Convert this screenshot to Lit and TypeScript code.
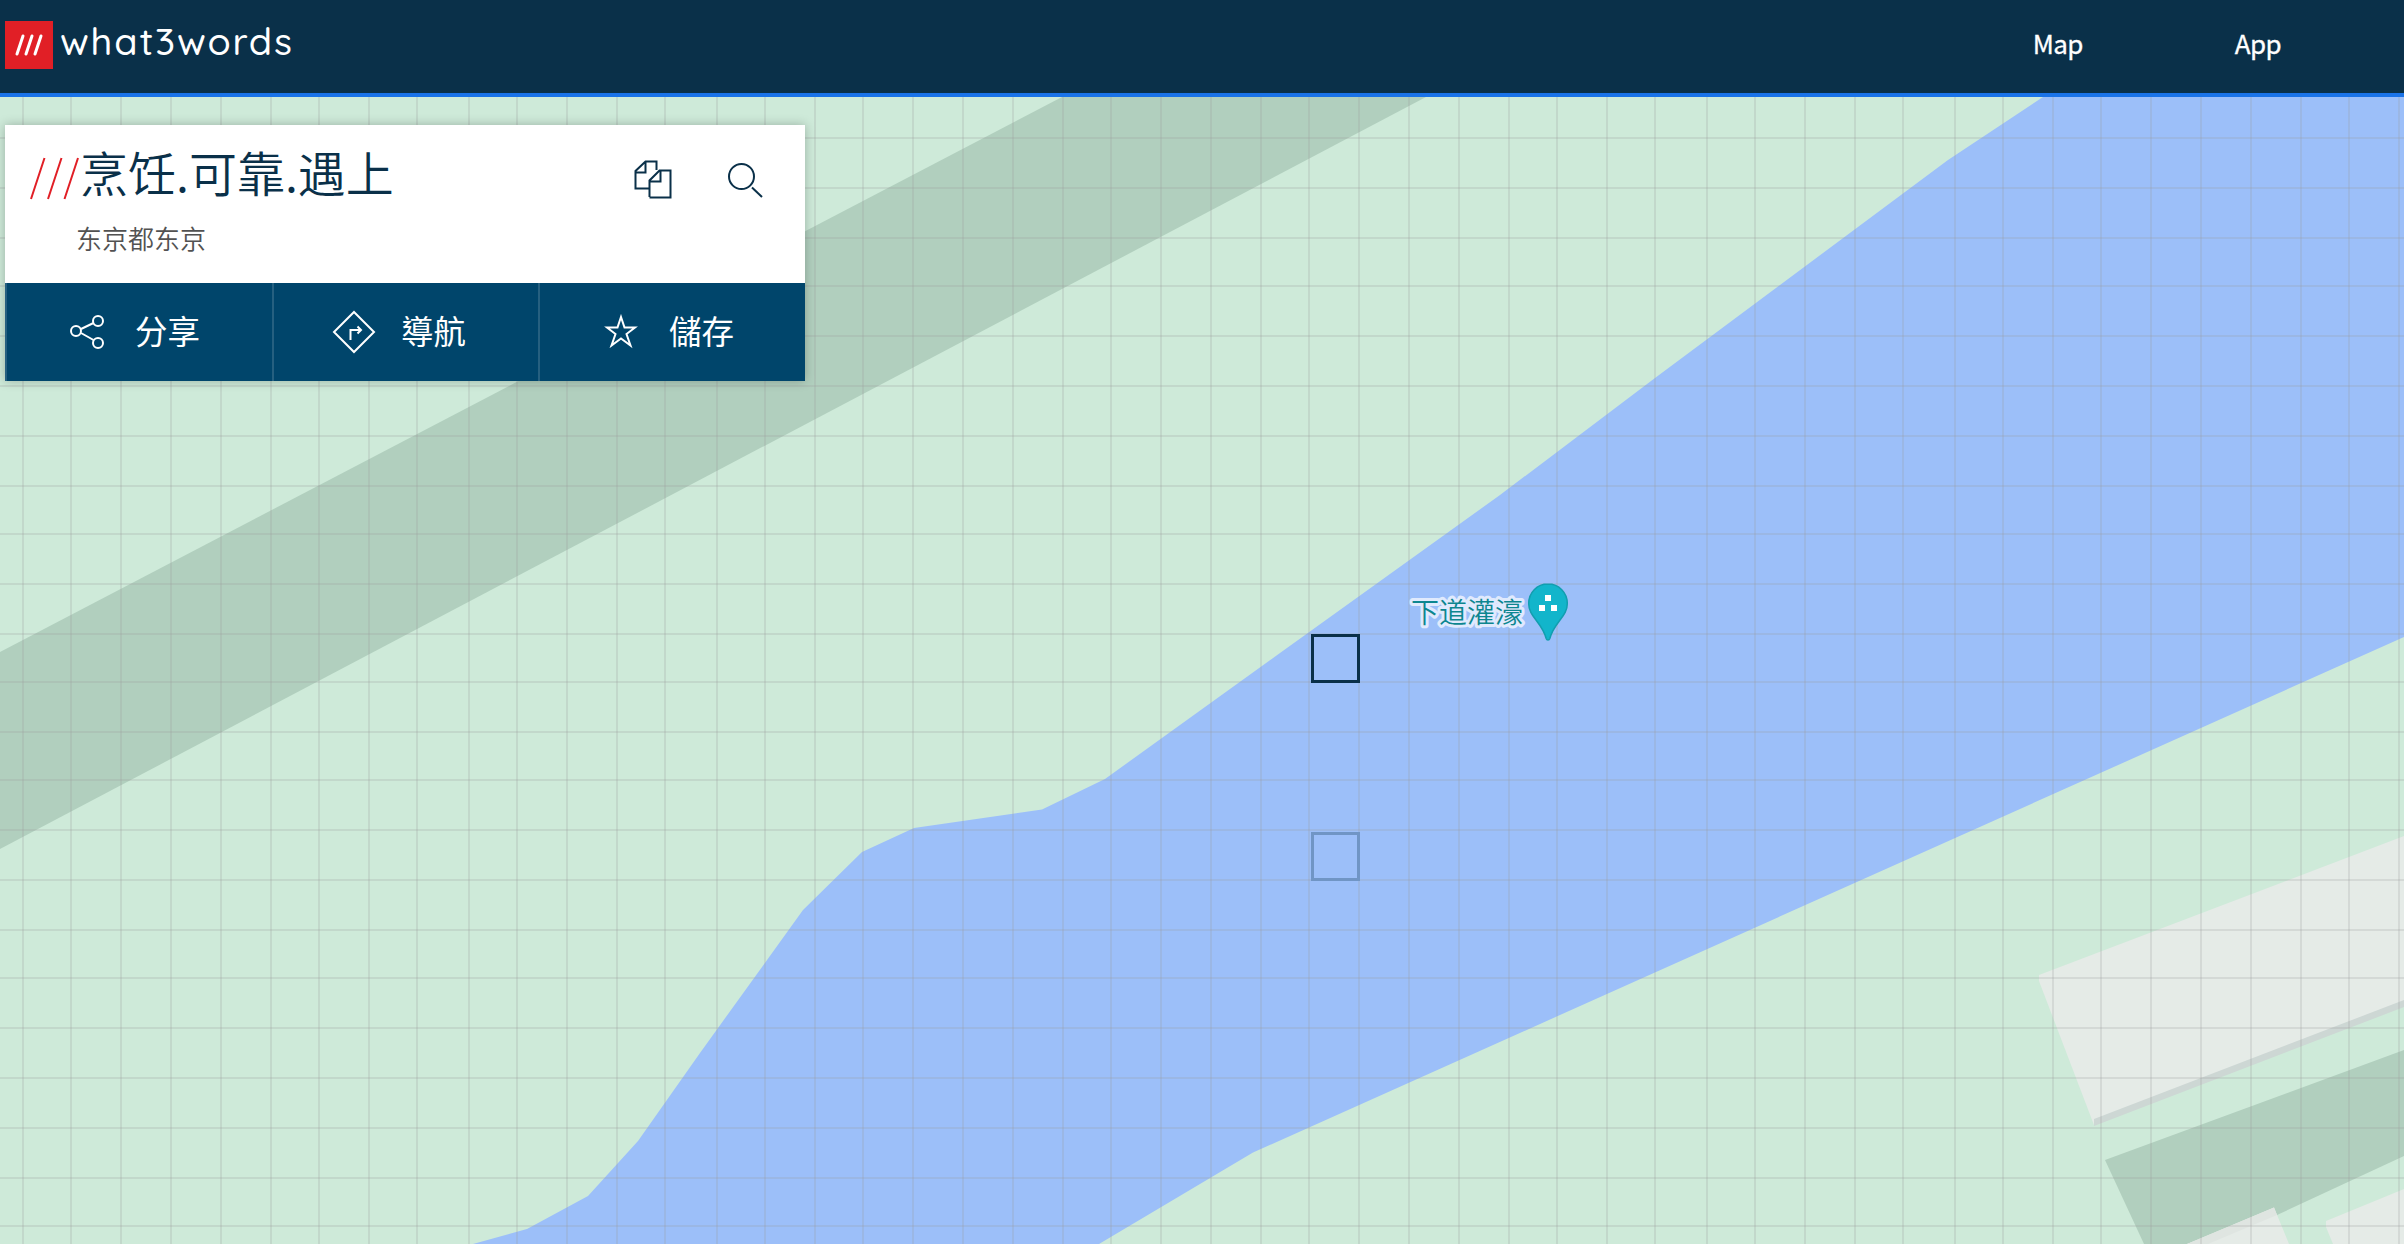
import { LitElement, html, svg, css } from "lit";
import { customElement } from "lit/decorators.js";

const COLS = [23, 71, 121, 171, 221, 271, 319, 369, 417, 469, 517, 567, 617, 665, 717, 765, 815, 863, 913, 963, 1013, 1063, 1111, 1161, 1211, 1261, 1309, 1359, 1409, 1459, 1509, 1557, 1607, 1655, 1707, 1755, 1805, 1855, 1903, 1955, 2003, 2053, 2101, 2151, 2201, 2251, 2301, 2349, 2399];
const ROWS = [138, 188, 238, 286, 336, 386, 436, 486, 534, 584, 634, 682, 732, 780, 830, 880, 930, 978, 1028, 1078, 1128, 1178, 1226];

@customElement("w3w-map")
export class W3wMap extends LitElement {
  static styles = css`
    :host { position: absolute; inset: 0; display: block; }
    svg { display: block; width: 100%; height: 100%; }
    .label {
      font: 350 28px "Noto Sans CJK SC", sans-serif; fill: #0d8690;
      stroke: #e0eafd; stroke-width: 6px; stroke-linejoin: round; paint-order: stroke;
    }
  `;
  render() {
    return html`<svg viewBox="0 97 2404 1147" preserveAspectRatio="none">
      <rect y="97" width="2404" height="1147" fill="#ceead9" />
      <path fill="#b1cfbe" d="M0 652L1062 97H1426L0 849z" />
      <path fill="#9cbff9" d="M473 1244L527 1229L588 1196L638 1141L700 1053L803 910L862 852L914 828L1042 809.500L1105 779L1280 653L1500 495L1655 378L1948 160L2043 97H2404V637L1253 1152.500L1099 1244z" />
      <path fill="#e5ebe7" d="M2039 975L2404 836V1003L2094 1125L2039 981z" />
      <path fill="#cdd7d4" d="M2094 1119L2404 1000V1007L2094 1126z" />
      <path fill="#b1cfbe" d="M2105 1160L2404 1050V1156L2277 1215L2187 1244H2144z" />
      <path fill="#e5ebe7" d="M2187 1244L2274 1207.500L2289 1244zM2326 1221L2404 1189V1244H2333L2326 1227z" />
      <path fill="#dfe5e1" d="M2187 1244L2274 1207.500L2277 1215L2208 1244z" />
      <g fill="rgba(155,155,155,.22)">
        ${COLS.map((x) => svg`<rect x=${x - 1} y="97" width="2" height="1147" />`)}
        ${ROWS.map((y) => svg`<rect x="0" y=${y - 1} width="2404" height="2" />`)}
      </g>
      <rect x="1312.500" y="635.500" width="46" height="46" fill="none" stroke="#0a3049" stroke-width="3" />
      <rect x="1312.500" y="833.500" width="46" height="46" fill="none" stroke="#7095c5" stroke-width="3" />
      <text class="label" x="1411" y="623">下道灌濠</text>
      <path fill="#12b5cb" stroke="#129eaf" stroke-width="1.500" d="M1548 584c-11 0-19.300 8.700-19.300 19.500c0 7.500 4 12 8 17.500c5 6.500 8 12 9.500 17.500c.6 2 3 2 3.600 0c1.500-5.500 4.500-11 9.500-17.500c4-5.500 8-10 8-17.500c0-10.800-8.300-19.500-19.300-19.500z" />
      <path fill="#fff" d="M1545 595h6v6h-6zM1539 605h6v6h-6zM1551 605h6v6h-6z" />
    </svg>`;
  }
}

@customElement("w3w-header")
export class W3wHeader extends LitElement {
  static styles = css`
    :host {
      box-sizing: border-box; height: 97px; padding-left: 5px; display: flex; align-items: flex-start;
      background: #0a3049; border-bottom: 4px solid #1a73e8; color: #fff;
    }
    .mark { display: block; width: 48px; height: 48px; margin-top: 21px; }
    .word { display: block; width: 240px; height: 48px; margin: 17px 0 0 4px; }
    .stroke { fill: none; stroke: #fff; stroke-width: 3; stroke-linecap: round; stroke-linejoin: round; }
    .name { font: 500 38px "Quicksand", "Lato", sans-serif; fill: #fff; }
    nav { margin-left: auto; display: flex; gap: 152px; padding: 24px 123px 0 0; font: 400 26px/38px "Noto Sans CJK SC", sans-serif; letter-spacing: -.6px; -webkit-text-stroke: .3px #fff; }
  `;
  render() {
    return html`
      <svg class="mark" viewBox="0 0 48 48">
        <rect width="48" height="48" fill="#e11f26" />
        <path class="stroke" d="M12 33L18 15M21 33L27 15M30 33L36 15" />
      </svg>
      <svg class="word" viewBox="0 0 240 48"><text class="name" x="3" y="38" textLength="232" lengthAdjust="spacing">what3words</text></svg>
      <nav><span>Map</span><span>App</span></nav>
    `;
  }
}

@customElement("w3w-card")
export class W3wCard extends LitElement {
  static styles = css`
    :host { display: block; width: 800px; box-shadow: 0 0 10px rgba(0, 0, 0, .25); font-family: "Noto Sans CJK SC", sans-serif; }
    svg { display: block; fill: none; stroke: currentColor; stroke-width: 2; flex: none; }
    .top { box-sizing: border-box; height: 158px; background: #fff; color: #0a3049; display: flex; padding: 14px 41px 0 24px; }
    .address { display: grid; grid-template-columns: 51px auto; align-content: start; }
    .slashes { width: 51px; height: 44px; margin-top: 17px; stroke: #e11f26; }
    h1 { margin: 0; font: 350 48px/64px "Noto Sans CJK SC", sans-serif; white-space: nowrap; }
    .near { grid-column: 1 / 3; margin: 16px 0 0 47px; font-size: 26px; font-weight: 350; line-height: 38px; color: #525252; }
    .tools { margin-left: auto; display: flex; gap: 56px; padding-top: 21px; }
    .actions { display: grid; grid-template-columns: 267px 266px 267px; height: 98px; background: #00456b; color: #fff; }
    .action { box-sizing: border-box; border-left: 2px solid #266080; display: flex; align-items: center; font-size: 32.5px; line-height: 48px; }
    .action span { margin-bottom: 4px; }
    .share { padding-left: 62px; }
    .share span { margin-left: 30px; }
    .nav { padding-left: 58px; }
    .nav span { margin-left: 25px; }
    .save { padding-left: 64px; }
    .save span { margin-left: 31px; }
    .nav, .save { font-family: "Noto Sans CJK TC", sans-serif; }
  `;
  render() {
    return html`
      <div class="top">
        <div class="address">
          <svg class="slashes" viewBox="0 0 51 44"><path d="M2 43L15.500 2M19 43L32.500 2M35.500 43L49 2" /></svg>
          <h1>烹饪.可靠.遇上</h1>
          <p class="near">东京都东京</p>
        </div>
        <div class="tools">
          <svg width="38" height="40" viewBox="0 0 38 40"><path d="M14.500 28.500H1.500V11L11.500 1.500H22.500V10M11.500 2V12.500H1.500M15.500 37V20.500L25.500 10.500H36.500V37.500H15.500M26.500 11V21.500H15.500" /></svg>
          <svg width="36" height="40" viewBox="0 0 36 40"><circle cx="13.500" cy="16.500" r="12.500" /><path d="M24 27.500L34 37" /></svg>
        </div>
      </div>
      <div class="actions">
        <div class="action share">
          <svg width="36" height="36" viewBox="0 0 36 36"><circle cx="7" cy="17" r="5" /><circle cx="29" cy="7" r="5" /><circle cx="29" cy="29" r="5" /><path d="M12 15L24.500 9M12 19L24.500 26" /></svg>
          <span>分享</span>
        </div>
        <div class="action nav">
          <svg width="44" height="44" viewBox="0 0 44 44"><path d="M22 2L42 22L22 42L2 22zM18.500 30V20H29M25.500 16.500L29 20L25.500 23.500" /></svg>
          <span>導航</span>
        </div>
        <div class="action save">
          <svg width="34" height="36" viewBox="0 0 34 36"><path d="M17 3L20.500 13.500H31L22.500 20L26.500 31.500L17 24.500L7.500 31.500L11.500 20L3 13.500H13.500z" /></svg>
          <span>儲存</span>
        </div>
      </div>
    `;
  }
}

@customElement("app-root")
export class AppRoot extends LitElement {
  static styles = css`
    :host { display: flex; flex-direction: column; width: 100%; height: 100vh; overflow: hidden; }
    main { position: relative; flex: 1; overflow: hidden; }
    .overlay { position: relative; padding: 28px 5px; }
  `;
  render() {
    return html`<w3w-header></w3w-header><main><w3w-map></w3w-map><div class="overlay"><w3w-card></w3w-card></div></main>`;
  }
}
